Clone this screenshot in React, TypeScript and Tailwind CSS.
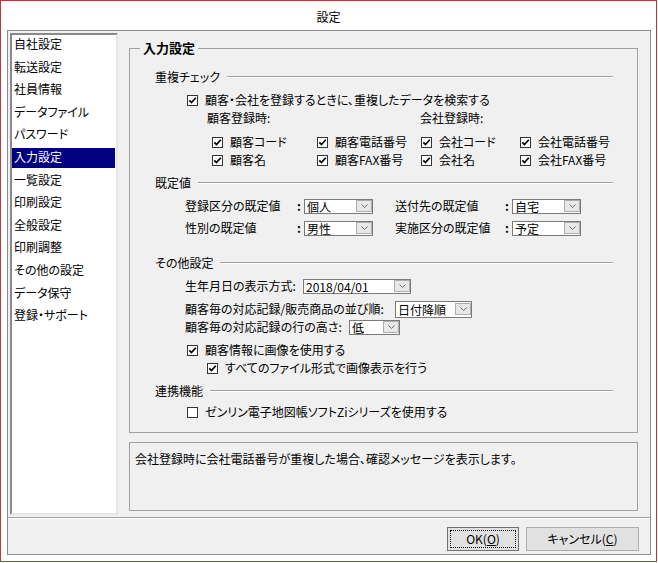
import React from "react";

const menu = [
  "自社設定",
  "転送設定",
  "社員情報",
  "データファイル",
  "パスワード",
  "入力設定",
  "一覧設定",
  "印刷設定",
  "全般設定",
  "印刷調整",
  "その他の設定",
  "データ保守",
  "登録・サポート",
];

function Box({ checked = true }: { checked?: boolean }) {
  return (
    <span className="w-[11px] h-[11px] border border-[#333] bg-white flex items-center justify-center shrink-0">
      {checked && (
        <svg width="9" height="9" viewBox="0 0 9 9">
          <path d="M1.3 4.3 L3.5 6.6 L7.8 1.8" stroke="#000" strokeWidth="1.7" fill="none" />
        </svg>
      )}
    </span>
  );
}

function Check({ label, checked = true, className = "" }: { label: string; checked?: boolean; className?: string }) {
  return (
    <div className={`flex items-center gap-[7px] ${className}`}>
      <Box checked={checked} />
      <span className="whitespace-nowrap">{label}</span>
    </div>
  );
}

function Header({ label, className = "" }: { label: string; className?: string }) {
  return (
    <div className={`flex items-center h-[18px] pl-[25px] pr-[24px] ${className}`}>
      <span className="whitespace-nowrap">{label}</span>
      <div className="flex-1 ml-[7px] h-[2px] border-t border-t-[#a0a0a0] border-b border-b-white" />
    </div>
  );
}

function Combo({ value, className = "" }: { value: string; className?: string }) {
  return (
    <div className={`h-[15px] border border-[#7a7a7a] bg-white flex items-center ${className}`}>
      <span className="flex-1 pl-[2px] leading-[13px] whitespace-nowrap">{value}</span>
      <div className="w-[16px] h-[12px] border border-[#adadad] bg-[#e8e8e8] flex items-center justify-center">
        <svg width="7" height="4" viewBox="0 0 7 4">
          <path d="M0.5 0.5 L3.5 3.5 L6.5 0.5" stroke="#6a6a6a" strokeWidth="1" fill="none" />
        </svg>
      </div>
    </div>
  );
}

export default function App() {
  return (
    <div className="w-[657px] h-[562px] border border-[#b13c3c] bg-white flex flex-col text-[12px] text-black font-['Noto_Sans_CJK_JP',sans-serif] [font-feature-settings:'palt']">
      <div className="h-[29px] flex items-center justify-center pt-[2px]">設定</div>

      <div className="ml-[6px] mr-[5px] mb-[6px] flex-1 border border-[#8c8c8c] bg-[#f0f0f0] flex flex-col">
        <div className="h-[486px] flex pl-[2px] pt-[2px] pb-[2px]">
          {/* left menu */}
          <div className="w-[108px] bg-white border-2 border-t-[#8a8a8a] border-l-[#8a8a8a] border-r-[#e6e6e6] border-b-[#e6e6e6] flex flex-col gap-[2.6px]">
            {menu.map((m) => (
              <div
                key={m}
                className={`h-[20px] flex items-center pl-[2px] pb-[2px] mr-[1px] whitespace-nowrap ${
                  m === "入力設定" ? "bg-[#000080] text-white" : ""
                }`}
              >
                {m}
              </div>
            ))}
          </div>

          {/* right side */}
          <div className="ml-[11px] w-[509px] flex flex-col">
            <fieldset className="mt-[7px] border border-[#a0a0a0] mx-0 px-0 pt-0 pb-[11px] min-w-0">
              <legend className="ml-[10px] px-[3px] text-[13px] font-bold leading-[16px]">入力設定</legend>

              <div className="pt-[12px] flex flex-col">
                <Header label="重複チェック" />
                <Check label="顧客・会社を登録するときに、重複したデータを検索する" className="h-[18px] mt-[5px] pl-[57px]" />
                <div className="h-[18px] flex items-center pl-[77px]">
                  <span className="w-[213px]">顧客登録時:</span>
                  <span>会社登録時:</span>
                </div>
                <div className="h-[18px] mt-[6px] flex items-center pl-[82px]">
                  <Check label="顧客コード" className="w-[105px]" />
                  <Check label="顧客電話番号" className="w-[104px]" />
                  <Check label="会社コード" className="w-[99px]" />
                  <Check label="会社電話番号" />
                </div>
                <div className="h-[18px] flex items-center pl-[82px]">
                  <Check label="顧客名" className="w-[105px]" />
                  <Check label="顧客FAX番号" className="w-[104px]" />
                  <Check label="会社名" className="w-[99px]" />
                  <Check label="会社FAX番号" />
                </div>

                <Header label="既定値" className="mt-[5px]" />
                <div className="h-[18px] mt-[5px] flex items-center pl-[55px]">
                  <span className="w-[112px]">登録区分の既定値</span>
                  <span className="w-[7px] font-bold">:</span>
                  <Combo value="個人" className="w-[69px]" />
                  <span className="w-[110px] ml-[22px]">送付先の既定値</span>
                  <span className="w-[7px] font-bold">:</span>
                  <Combo value="自宅" className="w-[69px]" />
                </div>
                <div className="h-[18px] mt-[4px] flex items-center pl-[55px]">
                  <span className="w-[112px]">性別の既定値</span>
                  <span className="w-[7px] font-bold">:</span>
                  <Combo value="男性" className="w-[69px]" />
                  <span className="w-[110px] ml-[22px]">実施区分の既定値</span>
                  <span className="w-[7px] font-bold">:</span>
                  <Combo value="予定" className="w-[69px]" />
                </div>

                <Header label="その他設定" className="mt-[17px]" />
                <div className="h-[18px] mt-[5px] flex items-center pl-[55px]">
                  <span className="w-[118px] whitespace-nowrap">生年月日の表示方式:</span>
                  <Combo value="2018/04/01" className="w-[108px]" />
                </div>
                <div className="h-[18px] mt-[5px] flex items-center pl-[55px]">
                  <span className="w-[210px] whitespace-nowrap">顧客毎の対応記録/販売商品の並び順:</span>
                  <Combo value="日付降順" className="w-[77px] h-[17px]" />
                </div>
                <div className="h-[18px] flex items-center pl-[55px]">
                  <span className="w-[164px] whitespace-nowrap">顧客毎の対応記録の行の高さ:</span>
                  <Combo value="低" className="w-[51px]" />
                </div>
                <Check label="顧客情報に画像を使用する" className="h-[18px] mt-[5px] pl-[57px]" />
                <Check label="すべてのファイル形式で画像表示を行う" className="h-[18px] pl-[77px]" />

                <Header label="連携機能" className="mt-[5px]" />
                <Check label="ゼンリン電子地図帳ソフトZiシリーズを使用する" checked={false} className="h-[18px] mt-[3px] pl-[57px]" />
              </div>
            </fieldset>

            <div className="mt-[9px] h-[69px] border border-[#a0a0a0] pl-[5px] pt-[8px] leading-[16px]">
              会社登録時に会社電話番号が重複した場合、確認メッセージを表示します。
            </div>
          </div>
        </div>

        <div className="h-[2px] border-t border-t-[#a0a0a0] border-b border-b-white" />

        <div className="flex-1 flex justify-end items-start pt-[8px] pr-[11px] gap-[7px]">
          <button className="w-[72px] h-[24px] border border-[#707070] bg-[#e1e1e1] flex p-[2px]">
            <span className="flex-1 border border-dotted border-black flex items-center justify-center">
              OK(<span className="underline">O</span>)
            </span>
          </button>
          <button className="w-[113px] h-[24px] border border-[#adadad] bg-[#e1e1e1] flex items-center justify-center">
            キャンセル(<span className="underline">C</span>)
          </button>
        </div>
      </div>
    </div>
  );
}
